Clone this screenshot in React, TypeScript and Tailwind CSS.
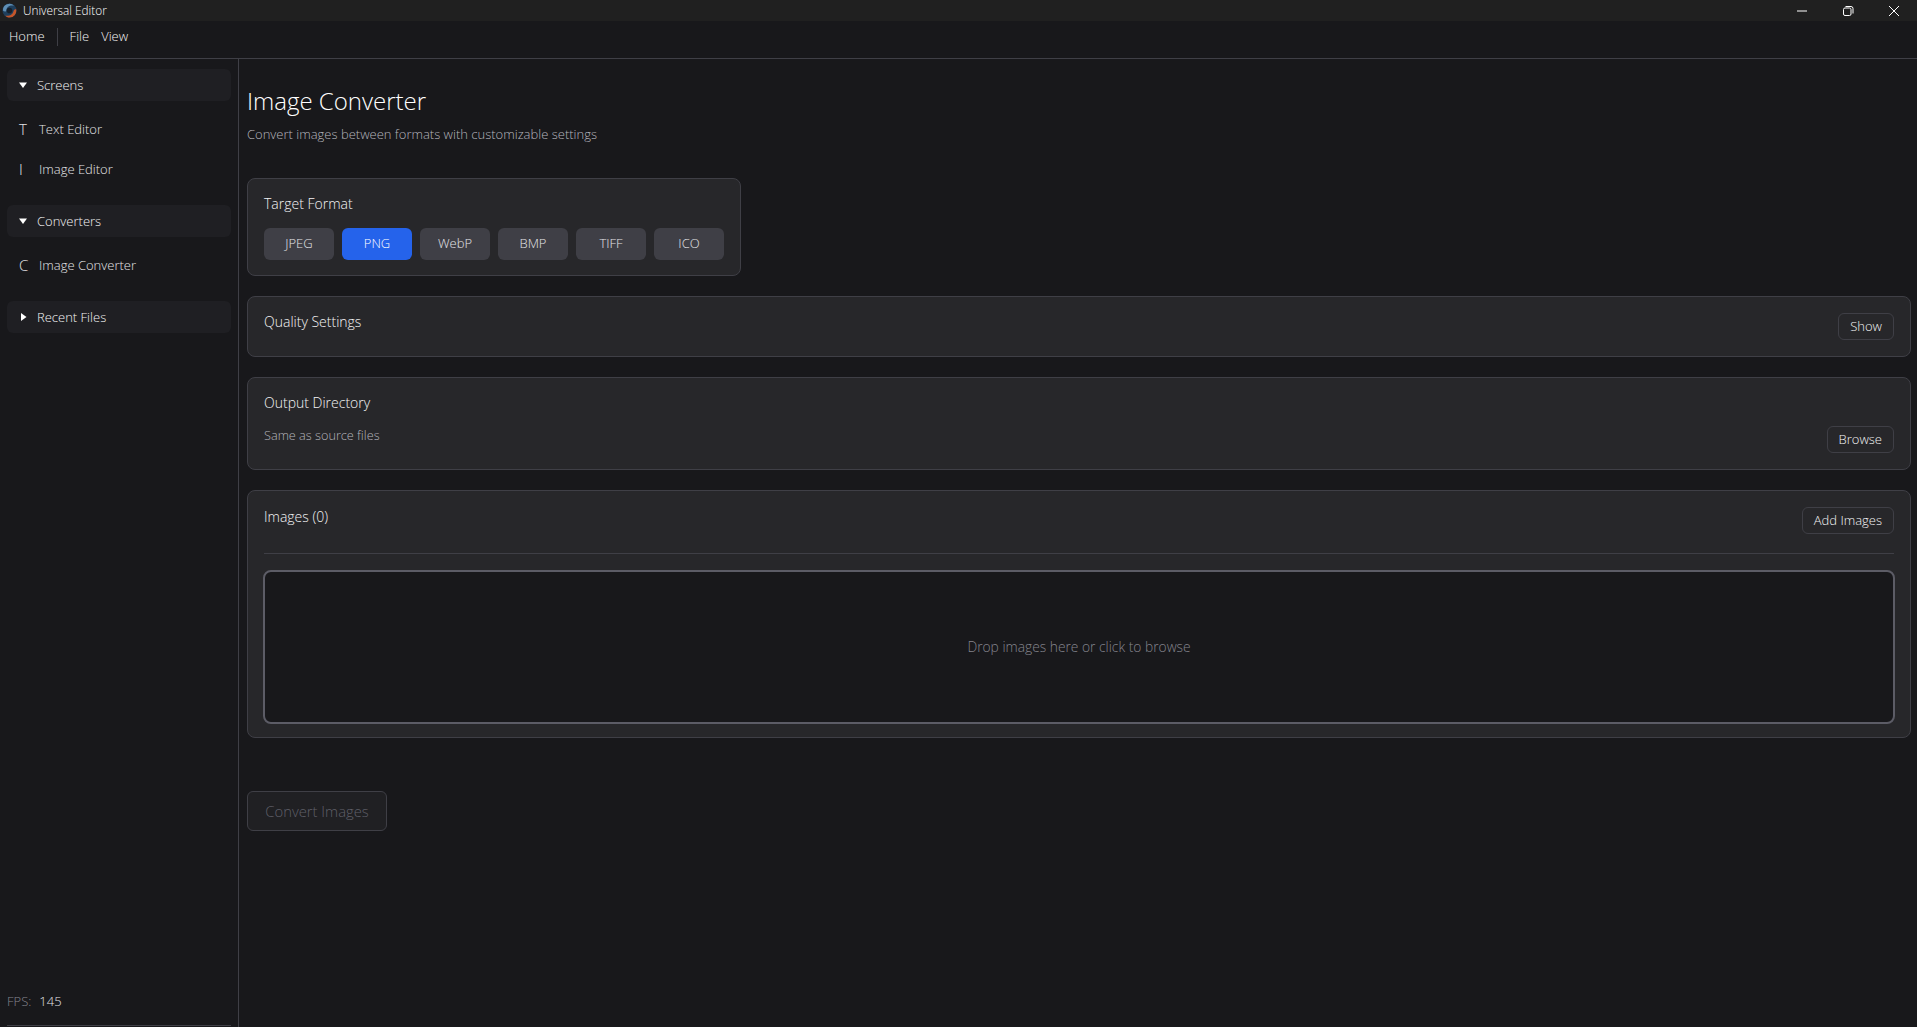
import React from "react";

const formats = ["JPEG", "PNG", "WebP", "BMP", "TIFF", "ICO"];

const SectionHeader = ({ label, open }: { label: string; open: boolean }) => (
  <div className="flex h-8 items-center rounded-md bg-[#1f1f23] pl-[11px] text-[13px] text-[#f4f4f5]">
    <svg width="10" height="10" viewBox="0 0 10 10" className="mr-[9px] shrink-0 fill-white">
      {open ? <path d="M1 2.5h8L5 8z" /> : <path d="M3 1v8l5.5-4z" />}
    </svg>
    <span className="pt-[1px]">{label}</span>
  </div>
);

const NavItem = ({ icon, label }: { icon: string; label: string }) => (
  <div className="flex h-5 items-center pl-[12px] pt-[1px] text-[13px] text-[#e4e4e7]">
    <span className="w-[20px] text-[15px] text-[#e4e4e7]">{icon}</span>
    {label}
  </div>
);

const OutlineButton = ({ label }: { label: string }) => (
  <button className="flex h-[27px] items-center rounded-md border border-[#3f3f46] px-[11px] text-[13px] text-[#f4f4f5]">
    {label}
  </button>
);

const Card = ({ className, children }: { className: string; children: React.ReactNode }) => (
  <section className={`rounded-lg border border-[#3f3f46] bg-[#27272a] ${className}`}>{children}</section>
);

export default function App() {
  return (
    <div
      className="flex h-screen flex-col overflow-hidden bg-[#18181b] text-[13px] font-light text-[#e4e4e7]"
      style={{ fontFamily: '"Open Sans", "Noto Sans", sans-serif' }}
    >
      {/* title bar */}
      <div className="flex h-[21px] shrink-0 items-center bg-[#202020] pl-[2px] text-[11.8px] text-white">
        <svg width="15" height="15" viewBox="0 0 16 16" className="mr-[6px] shrink-0">
          <circle cx="8" cy="8" r="7.5" fill="#1f3f5c" />
          <path d="M1 8a7 7 0 0 1 12-5C9 2 5 3.500 4.500 8.500 3.500 9.500 2 9 1 8z" fill="#5f8fb5" />
          <path d="M15 6.500a7.200 7.200 0 0 1-7 9c-2 0-3.500-1-4.500-2 4 .8 8-.5 9-5.500.5-.8 1.500-1.200 2.500-1.500z" fill="#c4562a" />
          <circle cx="8" cy="8" r="3" fill="#16202b" />
        </svg>
        <span>Universal Editor</span>
        <div className="ml-auto flex items-center gap-[34px] pr-[17px]">
          <svg width="12" height="12" viewBox="0 0 12 12" className="stroke-white">
            <path d="M1 6h10" />
          </svg>
          <svg width="12" height="12" viewBox="0 0 12 12" fill="none" className="stroke-white">
            <rect x="1.500" y="3" width="7.500" height="7.500" rx="1.500" />
            <path d="M3.500 1.500h5.500a2 2 0 0 1 2 2v5" />
          </svg>
          <svg width="12" height="12" viewBox="0 0 12 12" className="stroke-white">
            <path d="M1 1l10 10M11 1L1 11" />
          </svg>
        </div>
      </div>

      {/* menu bar */}
      <div className="flex h-[38px] shrink-0 items-center border-b border-[#3f3f46] pb-[6px] pl-[9px] text-[13px] text-[#f4f4f5]">
        <span>Home</span>
        <span className="mx-[12px] h-[18px] w-px bg-[#3f3f46]" />
        <span>File</span>
        <span className="ml-[12px]">View</span>
      </div>

      <div className="flex min-h-0 flex-1">
        {/* sidebar */}
        <aside className="flex w-[239px] shrink-0 flex-col border-r border-[#3f3f46] px-[7px] pt-[10px]">
          <SectionHeader label="Screens" open />
          <div className="mt-[18px] flex flex-col gap-[20px]">
            <NavItem icon="T" label="Text Editor" />
            <NavItem icon="I" label="Image Editor" />
          </div>
          <div className="mt-[26px]">
            <SectionHeader label="Converters" open />
          </div>
          <div className="mt-[18px]">
            <NavItem icon="C" label="Image Converter" />
          </div>
          <div className="mt-[26px]">
            <SectionHeader label="Recent Files" open={false} />
          </div>
          <div className="mt-auto flex items-center pb-[14px] text-[13px]">
            <span className="text-[#85858e]">FPS:</span>
            <span className="ml-[8px] text-[#e4e4e7]">145</span>
          </div>
          <div className="mb-[1px] h-px bg-[#3f3f46]" />
        </aside>

        {/* main */}
        <main className="flex min-w-0 flex-1 flex-col pl-[8px] pr-[6px] pt-[26px]">
          <h1 className="text-[24px] leading-[32px] text-white">Image Converter</h1>
          <p className="mt-[7px] text-[13px] leading-[20px] text-[#b4b4bb]">
            Convert images between formats with customizable settings
          </p>

          <Card className="mt-[34px] w-[494px] px-[16px] pb-[15px] pt-[15px]">
            <h2 className="text-[14px] leading-[20px] text-[#f4f4f5]">Target Format</h2>
            <div className="mt-[14px] flex gap-[8px]">
              {formats.map((f) => (
                <button
                  key={f}
                  className={`h-[32px] w-[70px] rounded-md text-[13px] ${
                    f === "PNG" ? "bg-[#2563eb] text-white" : "bg-[#3f3f46] text-[#e4e4e7]"
                  }`}
                >
                  {f}
                </button>
              ))}
            </div>
          </Card>

          <Card className="mt-[20px] flex h-[61px] items-start justify-between px-[16px] pt-[15px]">
            <h2 className="text-[14px] leading-[20px] text-[#f4f4f5]">Quality Settings</h2>
            <div className="mt-[1px]">
              <OutlineButton label="Show" />
            </div>
          </Card>

          <Card className="mt-[20px] flex h-[93px] justify-between px-[16px] pt-[15px]">
            <div>
              <h2 className="text-[14px] leading-[20px] text-[#f4f4f5]">Output Directory</h2>
              <p className="mt-[12px] text-[12.7px] leading-[20px] text-[#b4b4bb]">Same as source files</p>
            </div>
            <div className="mt-[33px]">
              <OutlineButton label="Browse" />
            </div>
          </Card>

          <Card className="mt-[20px] h-[248px] px-[16px] pt-[16px]">
            <div className="flex items-start justify-between border-b border-[#3f3f46] pb-[19px]">
              <h2 className="text-[14px] leading-[20px] text-[#f4f4f5]">Images (0)</h2>
              <OutlineButton label="Add Images" />
            </div>
            <div className="-mx-[1px] mt-[16px] flex h-[154px] items-center justify-center rounded-lg border-2 border-[#5c5c66] bg-[#18181b] pt-[1px] text-[13.8px] text-[#85858e]">
              Drop images here or click to browse
            </div>
          </Card>

          <button className="mt-[53px] flex h-[40px] w-[140px] items-center justify-center rounded-md border border-[#3f3f46] bg-[#202023] text-[14.8px] text-[#5f5f68]">
            Convert Images
          </button>
        </main>
      </div>
    </div>
  );
}
